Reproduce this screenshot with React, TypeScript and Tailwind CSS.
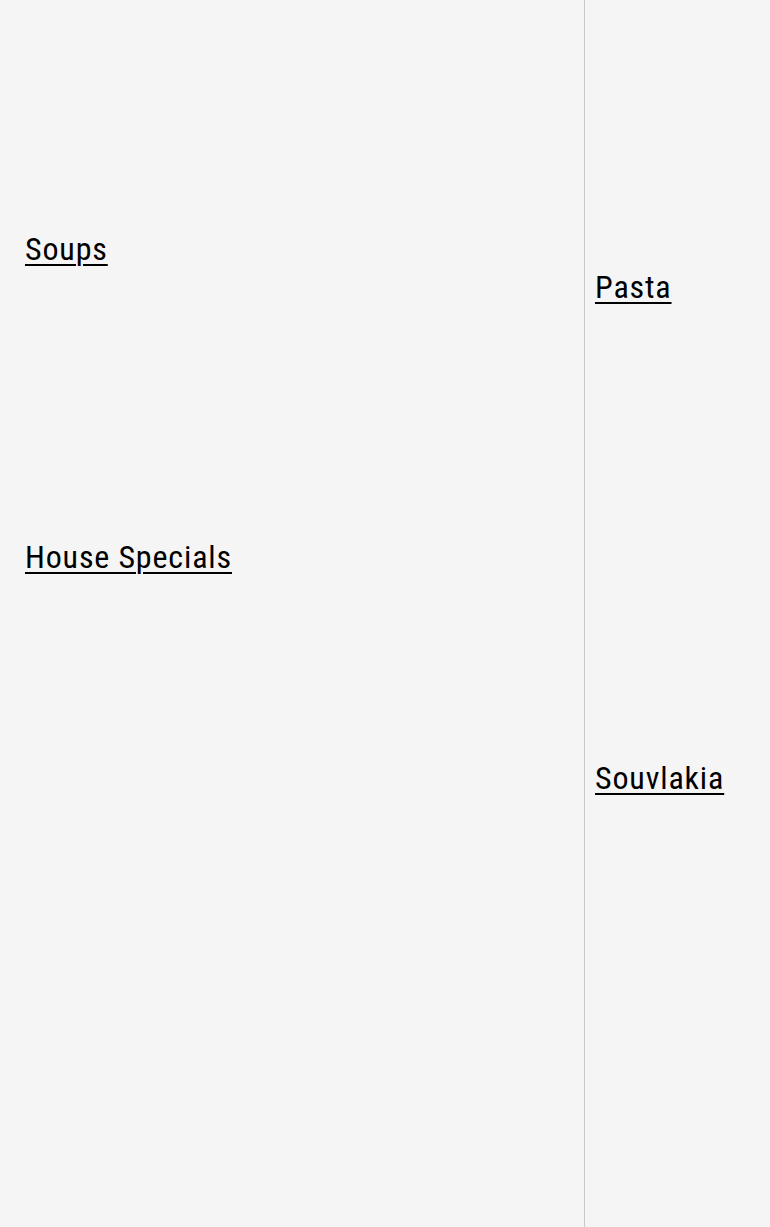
import React from "react";

const linkCls =
  "self-start text-[32px] leading-[36px] tracking-[0.85px] text-black underline decoration-2 underline-offset-[4px]";

export default function App() {
  return (
    <div className="flex min-h-[1227px] w-full bg-[#f5f5f5] font-['Roboto_Condensed',_'Roboto',_'Liberation_Sans',_sans-serif] font-stretch-condensed">
      <div className="flex w-[585px] flex-col border-r border-[#c8c8c8] pl-[25px]">
        <a href="#" className={`${linkCls} mt-[231px]`}>Soups</a>
        <a href="#" className={`${linkCls} mt-[272px]`}>House Specials</a>
      </div>
      <div className="flex flex-1 flex-col pl-[10px]">
        <a href="#" className={`${linkCls} mt-[269px]`}>Pasta</a>
        <a href="#" className={`${linkCls} mt-[455px]`}>Souvlakia</a>
      </div>
    </div>
  );
}
